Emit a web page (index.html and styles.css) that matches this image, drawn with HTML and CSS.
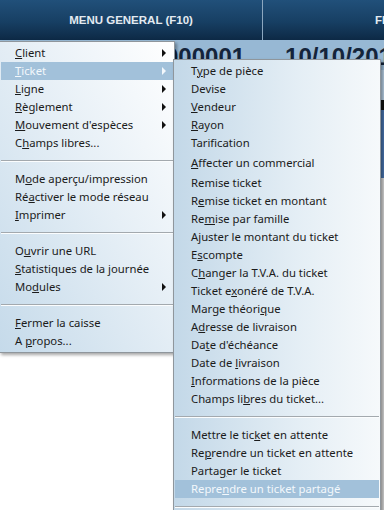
FILE: index.html
```html
<!DOCTYPE html>
<html lang="fr">
<head>
    <meta charset="UTF-8">
    <meta name="viewport" content="width=device-width, initial-scale=1.0">
    <title>Menu général</title>
    <link rel="stylesheet" href="styles.css">
</head>
<body>
    <div class="screen">
        <div class="topbar">
            <div class="tab tab-main">MENU GENERAL (F10)</div>
            <div class="tab tab-next">FERMER</div>
        </div>
        <div class="infobar">
            <span class="ticket-no">000001</span>
            <span class="ticket-date">10/10/2012</span>
        </div>
        <div class="edge"></div>
    </div>

    <ul class="menu menu-main">
        <li class="item has-sub"><u>C</u>lient</li>
        <li class="item has-sub active"><u>T</u>icket</li>
        <li class="item has-sub"><u>L</u>igne</li>
        <li class="item has-sub"><u>R</u>èglement</li>
        <li class="item has-sub"><u>M</u>ouvement d'espèces</li>
        <li class="item">C<u>h</u>amps libres...</li>
        <li class="sep"></li>
        <li class="item">M<u>o</u>de aperçu/impression</li>
        <li class="item">Ré<u>a</u>ctiver le mode réseau</li>
        <li class="item has-sub"><u>I</u>mprimer</li>
        <li class="sep"></li>
        <li class="item">O<u>u</u>vrir une URL</li>
        <li class="item"><u>S</u>tatistiques de la journée</li>
        <li class="item has-sub">Mo<u>d</u>ules</li>
        <li class="sep"></li>
        <li class="item"><u>F</u>ermer la caisse</li>
        <li class="item">A <u>p</u>ropos...</li>
    </ul>

    <ul class="menu menu-sub">
        <li class="item">T<u>y</u>pe de pièce</li>
        <li class="item">Devise</li>
        <li class="item"><u>V</u>endeur</li>
        <li class="item"><u>R</u>ayon</li>
        <li class="item">Tarification</li>
        <li class="item tall"><u>A</u>ffecter un commercial</li>
        <li class="item">Remise ticket</li>
        <li class="item">R<u>e</u>mise ticket en montant</li>
        <li class="item">Re<u>m</u>ise par famille</li>
        <li class="item">Ajuster le montant du ticket</li>
        <li class="item">E<u>s</u>compte</li>
        <li class="item">C<u>h</u>anger la T.V.A. du ticket</li>
        <li class="item">Ticket e<u>x</u>onéré de T.V.A.</li>
        <li class="item">Marge théori<u>q</u>ue</li>
        <li class="item">A<u>d</u>resse de livraison</li>
        <li class="item">Da<u>t</u>e d'échéance</li>
        <li class="item">Date de <u>l</u>ivraison</li>
        <li class="item"><u>I</u>nformations de la pièce</li>
        <li class="item">Champs li<u>b</u>res du ticket...</li>
        <li class="sep"></li>
        <li class="item">Mettre le tic<u>k</u>et en attente</li>
        <li class="item">Re<u>p</u>rendre un ticket en attente</li>
        <li class="item">Parta<u>g</u>er le ticket</li>
        <li class="item active">Repre<u>n</u>dre un ticket partagé</li>
        <li class="sep"></li>
        <li class="item">Annuler le ticket</li>
    </ul>
</body>
</html>
```

FILE: styles.css
```css
body {
    margin: 0;
    width: 384px;
    height: 510px;
    overflow: hidden;
    background: #fff;
    font-family: "Noto Sans", "Open Sans", sans-serif;
    font-size: 11.3px;
    color: #1b1b1b;
}
.screen {
    height: 510px;
}
.topbar {
    display: flex;
    height: 40px;
    overflow: hidden;
    background: linear-gradient(#21507a 0%, #173f63 55%, #0d2945 100%);
}
.tab {
    display: flex;
    align-items: center;
    flex-shrink: 0;
    font-family: "Liberation Sans", Arial, sans-serif;
    font-weight: bold;
    font-size: 11.5px;
    color: #e3eaf1;
    white-space: nowrap;
}
.tab-main {
    width: 262px;
    justify-content: center;
    border-right: 1px solid #8ca7bf;
}
.tab-next {
    padding-left: 112px;
}
.infobar {
    display: flex;
    gap: 40px;
    height: 30px;
    padding-left: 165px;
    background: #97b8d4;
    font-family: "Liberation Sans", Arial, sans-serif;
    font-weight: bold;
    font-size: 24px;
    line-height: 34px;
    color: #14243a;
    overflow: hidden;
    white-space: nowrap;
}
.edge {
    margin-left: 381px;
    height: 440px;
    background: linear-gradient(#b6cde2 0, #b6cde2 30px, #111 30px, #111 40px, #4772ab 40px, #4772ab 108px, #d6d6d6 108px);
}

/* menus lie over the screen */
.menu {
    position: absolute;
    margin: 0;
    padding: 2px 1px;
    list-style: none;
    border: 1px solid #8f969c;
    box-sizing: border-box;
    box-shadow: 2px 2px 3px rgba(0,0,0,0.35);
}
.menu-main {
    left: -1px;
    top: 41px;
    width: 176px;
    background: linear-gradient(to top right, #c5daea 0%, #e6eff6 55%, #ffffff 100%);
}
.menu-sub {
    left: 173px;
    top: 59px;
    width: 208px;
    background: linear-gradient(to right, #c3d8e8 0%, #e4eef5 60%, #f6f9fb 100%);
}
.item {
    position: relative;
    height: 18px;
    line-height: 18px;
    padding-left: 14px;
    white-space: nowrap;
}
.menu-sub .item {
    padding-left: 16px;
}
.item.tall {
    height: 22px;
    line-height: 22px;
}
.item u {
    text-decoration-thickness: 1px;
    text-underline-offset: 1px;
}
.item.active {
    background: #a2c1da;
    color: #f3f8fc;
}
.has-sub::after {
    content: "";
    position: absolute;
    right: 7px;
    top: 5px;
    border-left: 4px solid #111;
    border-top: 4px solid transparent;
    border-bottom: 4px solid transparent;
}
.has-sub.active::after {
    border-left-color: #f3f8fc;
}
.sep {
    margin: 8px 0 8px;
    border-top: 1px solid #a3a9ae;
    border-bottom: 1px solid #fbfdfe;
}
```
